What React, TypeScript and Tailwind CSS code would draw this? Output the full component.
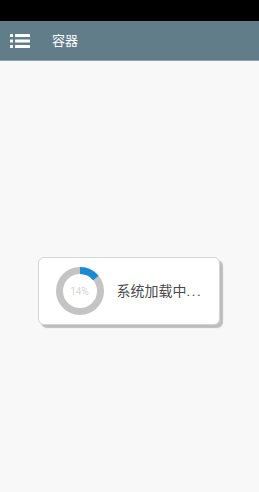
export default function App() {
  const pct = 14;
  const r = 20.5;
  const c = 2 * Math.PI * r;
  return (
    <div className="flex h-[492px] w-[259px] flex-col bg-[#f8f8f8] font-['Roboto','Noto_Sans_CJK_SC',sans-serif]">
      <div className="h-[21px] bg-black" />
      <header className="flex h-[40px] items-center border-b border-[#8fa2ad] bg-[#627d8a] pl-[10px]">
        <svg width="20" height="16" viewBox="0 0 20 16" className="text-white">
          <rect x="0" y="1" width="3" height="3" rx="0.5" fill="currentColor" />
          <rect x="5" y="1" width="15" height="3" rx="0.5" fill="currentColor" />
          <rect x="0" y="6.5" width="3" height="3" rx="0.5" fill="currentColor" />
          <rect x="5" y="6.5" width="15" height="3" rx="0.5" fill="currentColor" />
          <rect x="0" y="12" width="3" height="3" rx="0.5" fill="currentColor" />
          <rect x="5" y="12" width="15" height="3" rx="0.5" fill="currentColor" />
        </svg>
        <span className="ml-[22px] text-[13px] text-white">容器</span>
      </header>
      <main className="flex flex-1 items-start justify-center pt-[196px]">
        <div className="ml-[-2px] flex h-[68px] w-[182px] items-center rounded-[6px] border border-[#d4d4d4] bg-white pl-[17px] shadow-[3px_3px_1px_0_#bdbdbd]">
          <div className="relative h-[48px] w-[48px]">
            <svg width="48" height="48" viewBox="0 0 48 48" className="-rotate-90">
              <circle cx="24" cy="24" r={r} fill="none" stroke="#c4c4c4" strokeWidth="7" />
              <circle
                cx="24"
                cy="24"
                r={r}
                fill="none"
                stroke="#1a8ad4"
                strokeWidth="7"
                strokeDasharray={`${(c * pct) / 100} ${c}`}
              />
            </svg>
            <span className="absolute inset-0 flex items-center justify-center text-[10px] font-light text-[#c4c4c4]">
              {pct}%
            </span>
          </div>
          <span className="ml-[13px] text-[14px] text-[#4a4a4a]">
            系统加载中<span className="tracking-[1.5px]">...</span>
          </span>
        </div>
      </main>
    </div>
  );
}
